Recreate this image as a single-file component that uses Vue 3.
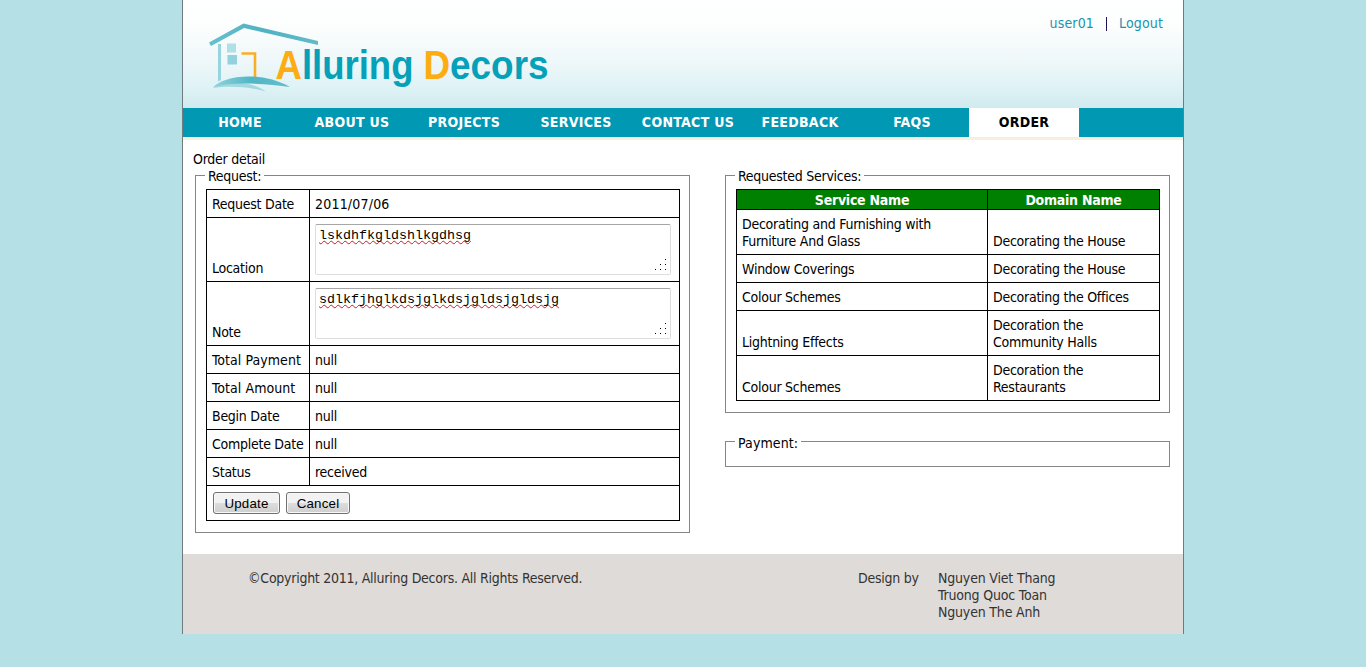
<script setup>
const nav = ['HOME', 'ABOUT US', 'PROJECTS', 'SERVICES', 'CONTACT US', 'FEEDBACK', 'FAQS', 'ORDER']
const rows = [
  { label: 'Request Date', value: '2011/07/06' },
  { label: 'Location', value: 'lskdhfkgldshlkgdhsg', area: true },
  { label: 'Note', value: 'sdlkfjhglkdsjglkdsjgldsjgldsjg', area: true },
  { label: 'Total Payment', value: 'null', wide: true },
  { label: 'Total Amount', value: 'null', wide: true },
  { label: 'Begin Date', value: 'null' },
  { label: 'Complete Date', value: 'null' },
  { label: 'Status', value: 'received' },
]
const services = [
  ['Decorating and Furnishing with Furniture And Glass', 'Decorating the House'],
  ['Window Coverings', 'Decorating the House'],
  ['Colour Schemes', 'Decorating the Offices'],
  ['Lightning Effects', 'Decoration the Community Halls'],
  ['Colour Schemes', 'Decoration the Restaurants'],
]
</script>

<template>
  <div class="page">
    <header class="header">
      <svg class="logo" width="360" height="84" viewBox="200 15 360 84">
        <defs>
          <linearGradient id="roof" x1="0" x2="1">
            <stop offset="0" stop-color="#68bfcd" /><stop offset=".5" stop-color="#4fb2c2" /><stop offset="1" stop-color="#62bac8" />
          </linearGradient>
          <linearGradient id="hill" x1="0" x2="1">
            <stop offset="0" stop-color="#93d3dc" /><stop offset=".5" stop-color="#4fb6c5" /><stop offset="1" stop-color="#66bfcc" />
          </linearGradient>
        </defs>
        <path d="M209 42.5 L243.5 23.6 L318 41 V45 L244 28 L211 46 Z" fill="url(#roof)" />
        <path d="M218 44 H221 V80 L218 81.5 Z" fill="#98d4de" />
        <rect x="227" y="43.500" width="9" height="9" fill="#afe0e6" />
        <rect x="227.500" y="55" width="9.500" height="9.500" fill="#93d2dd" />
        <path d="M241.500 53.500 H255 V77" fill="none" stroke="#f9ae26" stroke-width="2.600" />
        <path d="M213 88 C224 80 250 80 266 91.500 C250 87 229 85.500 213 88 Z" fill="#a2d9e1" />
        <path d="M213 87.500 C222 76 260 70 290 87 C268 84.500 235 80.500 213 87.500 Z" fill="url(#hill)" />
        <g class="brand">
          <text x="275.500" y="79" textLength="138" lengthAdjust="spacingAndGlyphs"><tspan class="cap">A</tspan>lluring</text>
          <text x="423.500" y="79" textLength="125" lengthAdjust="spacingAndGlyphs"><tspan class="cap">D</tspan>ecors</text>
        </g>
      </svg>
      <div class="account"><a>user01</a><i></i><a>Logout</a></div>
    </header>
    <nav class="nav">
      <a v-for="n in nav" :key="n" :class="{ active: n === 'ORDER' }">{{ n }}</a>
    </nav>
    <main class="main">
      <div class="title">Order detail</div>
      <div class="columns">
        <fieldset class="request">
          <legend>Request:</legend>
          <table>
            <colgroup><col class="c1"><col></colgroup>
            <tbody>
              <tr v-for="r in rows" :key="r.label">
                <td :class="{ wide: r.wide }">{{ r.label }}</td>
                <td v-if="r.area" class="areacell">
                  <div class="area">
                    <span>{{ r.value }}</span>
                    <svg class="grip" width="12" height="11" viewBox="0 0 12 11" shape-rendering="crispEdges">
                      <path d="M10 0h1v1h-1zM5 5h1v1h-1zM10 5h1v1h-1zM0 10h1v1h-1zM5 10h1v1h-1zM10 10h1v1h-1z" />
                    </svg>
                  </div>
                </td>
                <td v-else :class="{ date: r.label === 'Request Date' }">{{ r.value }}</td>
              </tr>
              <tr>
                <td colspan="2" class="actions"><div><button>Update</button><button>Cancel</button></div></td>
              </tr>
            </tbody>
          </table>
        </fieldset>
        <div class="right">
          <fieldset>
            <legend>Requested Services:</legend>
            <table>
              <colgroup><col class="c2"><col></colgroup>
              <thead><tr><th>Service Name</th><th>Domain Name</th></tr></thead>
              <tbody>
                <tr v-for="(s, i) in services" :key="i"><td class="svc">{{ s[0] }}</td><td class="dom">{{ s[1] }}</td></tr>
              </tbody>
            </table>
          </fieldset>
          <fieldset class="payment"><legend>Payment:</legend></fieldset>
        </div>
      </div>
    </main>
    <footer class="footer">
      <div class="copy">©Copyright 2011, Alluring Decors. All Rights Reserved.</div>
      <div class="by">Design by</div>
      <div class="names">Nguyen Viet Thang<br>Truong Quoc Toan<br>Nguyen The Anh</div>
    </footer>
  </div>
</template>

<style>
body { background: #b4e0e6; }
</style>

<style scoped>
.page {
  box-sizing: border-box;
  width: 1002px;
  height: 634px;
  margin-left: 182px;
  border: solid #6e7c80;
  border-width: 0 1px;
  background: #fff;
  color: #000;
  font: 14px/17px "DejaVu Sans Condensed", "DejaVu Sans", Tahoma, sans-serif;
  letter-spacing: -0.26px;
  display: flex;
  flex-direction: column;
}
.header {
  height: 108px;
  box-sizing: border-box;
  display: flex;
  justify-content: space-between;
  padding: 15px 20px 0 17px;
  background: linear-gradient(#fff 0%, #fdfefe 22%, #eef7f9 58%, #def2f5 82%, #d0eaed 100%);
}
.logo { display: block; }
.brand { font: bold 40px "Liberation Sans", Arial, sans-serif; letter-spacing: 0; fill: #05a1b8; }
.cap { fill: #fdac12; }
.account { display: flex; align-items: center; height: 17px; color: #1894ae; letter-spacing: 0.15px; }
.account i { width: 1px; height: 14px; margin: 0 12px; background: #24135a; }
.nav { display: flex; height: 29px; background: #0198b4; border-bottom: 3px solid #f8eede; }
.nav a {
  width: 110px;
  margin-left: 2px;
  color: #fff;
  font-weight: bold;
  line-height: 29px;
  text-align: center;
  letter-spacing: 0.3px;
  white-space: nowrap;
}
.nav .active { background: #fff; color: #000; }
.main { height: 414px; box-sizing: border-box; padding: 11px 13px 0 12px; }
.title { height: 16px; margin-left: -2px; }
.columns { display: flex; justify-content: space-between; align-items: flex-start; }
fieldset { box-sizing: border-box; margin: 0; padding: 5px 9px 11px 10px; border: 1px solid #868686; min-width: 0; }
legend { box-sizing: border-box; margin-left: -1px; padding: 1px 3px 0; height: 17px; }
.request { width: 495px; }
.right { width: 445px; display: flex; flex-direction: column; gap: 20px; }
.payment { height: 34px; padding-top: 0; padding-bottom: 0; }
.payment legend { padding-top: 2px; letter-spacing: 0.1px; }
table { width: 100%; border-collapse: collapse; table-layout: fixed; }
.c1 { width: 103px; }
.c2 { width: 251px; }
td, th { border: 1px solid #000; padding: 6px 5px 4px; vertical-align: bottom; text-align: left; white-space: nowrap; }
th { padding: 2px 1px 0; background: #008000; color: #fff; text-align: center; }
.svc, .dom { white-space: normal; }
.svc { padding-right: 40px; }
.dom { padding-right: 25px; }
.wide { letter-spacing: 0.05px; }
.date { letter-spacing: 0.2px; }
.areacell { padding: 6px 8px 6px 5px; }
.area {
  position: relative;
  box-sizing: border-box;
  height: 51px;
  padding: 3px 3px;
  border: 1px solid #ddd;
  border-top-color: #a6a6a6;
  border-radius: 2px;
  font: 13.333px/15px "Liberation Mono", "Courier New", monospace;
  letter-spacing: 0;
}
.area span { text-decoration: underline wavy #c81e1e 1px; text-underline-offset: 1px; text-decoration-skip-ink: none; }
.grip { position: absolute; right: 3px; bottom: 4px; }
.actions { padding: 6px; }
.actions div { display: flex; gap: 6px; height: 22px; }
button {
  box-sizing: border-box;
  height: 22px;
  width: 67px;
  padding: 0;
  border: 1px solid #707070;
  border-radius: 3px;
  background: linear-gradient(#f2f2f2 0 50%, #dddddd 50%, #cfcfcf);
  box-shadow: inset 0 0 0 1px #f8f8f8;
  font: 13.333px "Liberation Sans", Arial, sans-serif;
  letter-spacing: 0.2px;
  color: #000;
}
button + button { width: 64px; }
.footer { height: 80px; box-sizing: border-box; padding: 16px 0 0 65px; display: flex; background: #dfdbd8; color: #333; }
.copy { width: 610px; }
.by { width: 80px; }
.names { letter-spacing: -0.18px; }
</style>
